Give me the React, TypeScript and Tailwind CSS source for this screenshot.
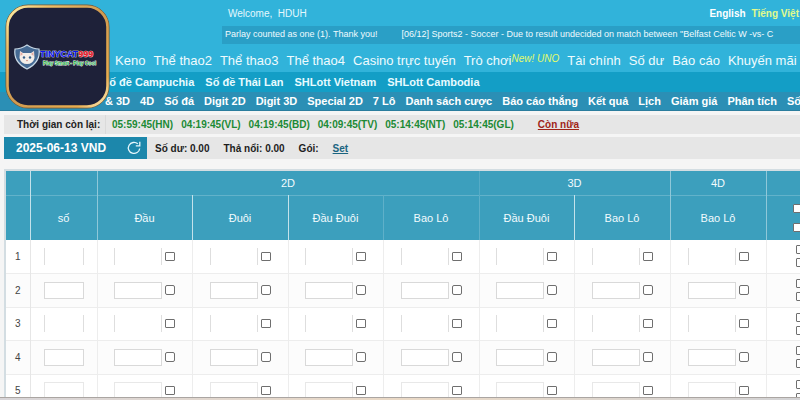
import React from 'react';
import clsx from 'clsx';

interface BetColumn {
  label: string;
  width: string;
  border: string;
}

const mainNav = ['Keno', 'Thể thao2', 'Thể thao3', 'Thể thao4', 'Casino trực tuyến', 'Trò chơi', 'Tài chính', 'Số dư', 'Báo cáo', 'Khuyến mãi'];

const lotteryNav = ['Số đề Campuchia', 'Số đề Thái Lan', 'SHLott Vietnam', 'SHLott Cambodia'];

const gameNav = [
  '& 3D', '4D', 'Số đá', 'Digit 2D', 'Digit 3D', 'Special 2D', '7 Lô', 'Danh sách cược',
  'Báo cáo thắng', 'Kết quả', 'Lịch', 'Giảm giá', 'Phân tích', 'Số',
];

const timers = ['05:59:45(HN)', '04:19:45(VL)', '04:19:45(BD)', '04:09:45(TV)', '05:14:45(NT)', '05:14:45(GL)'];

const betColumns: BetColumn[] = [
  { label: 'Đầu', width: 'w-[95px]', border: 'border-[#c4e2eb]' },
  { label: 'Đuôi', width: 'w-[96px]', border: 'border-[#c4e2eb]' },
  { label: 'Đầu Đuôi', width: 'w-[95px]', border: 'border-[#5fb0c9]' },
  { label: 'Bao Lô', width: 'w-[96px]', border: 'border-[#5fb0c9]' },
  { label: 'Đầu Đuôi', width: 'w-[95px]', border: 'border-[#c4e2eb]' },
  { label: 'Bao Lô', width: 'w-[96px]', border: 'border-[#8fc8d9]' },
  { label: 'Bao Lô', width: 'w-[96px]', border: 'border-[#8fc8d9]' },
];

const rows = [1, 2, 3, 4, 5];

const Logo: React.FC = () => (
  <a href="#" aria-label="TINYCAT999" className="absolute left-[5px] top-[4px] z-10 block size-[105px]">
    <svg viewBox="0 0 105 105" className="size-full">
      <defs>
        <linearGradient id="gold" x1="0" y1="0" x2="1" y2="1">
          <stop offset="0" stopColor="#fff0a8" />
          <stop offset="0.200" stopColor="#efc067" />
          <stop offset="0.500" stopColor="#d09a50" />
          <stop offset="0.850" stopColor="#e8ad4e" />
          <stop offset="1" stopColor="#fff0c0" />
        </linearGradient>
      </defs>
      <rect x="1" y="1" width="103" height="103" rx="22" fill="#1e2139" stroke="#7a5a30" strokeWidth="1" />
      <rect x="2.500" y="2.500" width="100" height="100" rx="20.500" fill="none" stroke="url(#gold)" strokeWidth="2.600" />
      {/* Shield with the cat's head */}
      <path d="M22 41 Q28 45 34 45 Q36 58 22 65 Q8 58 10 45 Q16 45 22 41Z" fill="#456a94" stroke="#c9d9e6" strokeWidth="1.200" />
      <path d="M15 47 L18 49 H26 L29 47 L29.500 54 Q28 60 22 60 Q16 60 14.500 54Z" fill="#f3eee9" />
      <path d="M15.500 48 L18 50 L15.500 52Z M28.500 48 L26 50 L28.500 52Z" fill="#e3a9a0" />
      <circle cx="19" cy="53.500" r="1.200" fill="#35608a" />
      <circle cx="25" cy="53.500" r="1.200" fill="#35608a" />
      <path d="M21 56 H23 L22 57.500Z" fill="#c9786f" />
      <text x="35" y="53" fontFamily="Liberation Sans" fontWeight="700" fontSize="9" stroke="#fff" strokeWidth="0.600" paintOrder="stroke">
        <tspan fill="#0a14f0">TINYCAT</tspan>
        <tspan fill="#f0101c">999</tspan>
      </text>
      <text x="38" y="61" fontFamily="Liberation Sans" fontWeight="700" fontSize="5" fill="#0ca838" stroke="#fff" strokeWidth="0.800" paintOrder="stroke">
        Play Smart - Play Cool
      </text>
    </svg>
  </a>
);

const RefreshIcon: React.FC = () => (
  <svg viewBox="0 0 14 14" className="size-[14px]" fill="none" stroke="#e6f7fc" strokeWidth="1.300">
    <path d="M12.700 7.500 A5.700 5.500 0 1 1 10.800 2.800" />
    <path d="M12.800 0.800 V4.800 H8.800" />
  </svg>
);

const Check: React.FC<{ label: string; even?: boolean }> = ({ label, even }) => (
  <input
    type="checkbox"
    aria-label={label}
    className={clsx(
      'w-[10px] shrink-0 appearance-none border border-[#6f6f6f] bg-white',
      even ? 'h-[10px] rounded-[2px]' : 'h-[9px] rounded-[1px]',
    )}
  />
);

const fieldBorder = (row: number) => {
  if (row % 2 === 0) return 'border border-[#d9d9d9]';
  return row === 5 ? 'border border-[#e8e8e8]' : 'border-x border-[#dedede]';
};

const App: React.FC = () => {
  return (
    <div className="relative flex h-screen flex-col overflow-hidden bg-[#f5f5f5] font-['Liberation_Sans',Arial,sans-serif] whitespace-nowrap">
      <Logo />

      {/* Header */}
      <header className="shrink-0 border-b border-[#2a7d9d] bg-[#31b3da] text-white">
        <div className="flex h-[26px] items-center justify-between pl-[228px] pr-[1px] text-[10px] text-[#e4f8fd]">
          <span>Welcome,&nbsp; HDUH</span>
          <div className="flex gap-1.5 font-bold">
            <a href="#" className="text-white">English</a>
            <a href="#" className="text-[#e2fb8c]">Tiếng Việt</a>
          </div>
        </div>
        <div className="ml-[222px] flex h-[18px] items-center gap-6 overflow-hidden bg-[#2a9fc6] pl-[3px] text-[9px] text-[#f0fbfe]">
          <span>Parlay counted as one (1). Thank you!</span>
          <span>[06/12] Sports2 - Soccer - Due to result undecided on match between "Belfast Celtic W -vs- C</span>
        </div>
        <nav className="flex h-7 items-center gap-2 pl-[115px] pt-1.5 text-[13px] text-[#effbfe]">
          {mainNav.map(item => (
            <a key={item} href="#" className="flex shrink-0 items-center">
              {item}
              {item === 'Trò chơi' && <em className="pb-1.5 text-[10px] text-[#e2fb6c]">New! UNO</em>}
            </a>
          ))}
        </nav>
        <nav className="flex h-5 items-center gap-[11px] bg-[#139ec6] pl-[102px] text-[11px] font-bold text-[#e8fbff]">
          {lotteryNav.map(item => (
            <a key={item} href="#">{item}</a>
          ))}
        </nav>
        <nav className="flex h-[18px] items-center gap-2.5 bg-[#2b8fb5] pl-[105px] text-[11px] font-bold">
          {gameNav.map(item => (
            <a key={item} href="#" className="shrink-0">{item}</a>
          ))}
        </nav>
      </header>

      {/* Time left */}
      <div className="ml-1 mt-1 flex h-[19px] shrink-0 items-center bg-[#e6e6e6] text-[10px] font-bold text-[#1c8a35]">
        <span className="flex h-full w-[102px] items-center border-r border-[#dadada] pl-[13px] text-[#222]">Thời gian còn lại:</span>
        <div className="flex gap-2 pl-1.5">
          {timers.map(timer => (
            <span key={timer}>{timer}</span>
          ))}
        </div>
        <a href="#" className="ml-6 text-[#a02418] underline">Còn nữa</a>
      </div>

      {/* Balance */}
      <div className="ml-1 mt-[3px] flex h-[22px] shrink-0 items-center bg-[#e6e6e6] text-[10px] font-bold text-[#1d1d1d]">
        <div className="flex h-full w-[143px] items-center justify-between bg-[#1c87ab] pl-3 pr-1.5 text-[12px] text-white">
          <span>2025-06-13 VND</span>
          <button type="button" aria-label="Refresh"><RefreshIcon /></button>
        </div>
        <div className="flex gap-3.5 pl-2">
          <span>Số dư: 0.00</span>
          <span>Thả nổi: 0.00</span>
          <span>Gói:</span>
          <a href="#" className="text-[#1a6480] underline">Set</a>
        </div>
      </div>

      {/* Bet table */}
      <main className="ml-1 mt-2.5 min-h-0 flex-1 overflow-hidden border-l-2 border-t-2 border-[#d3dde2]">
        <table className="w-[860px] min-w-full table-fixed border-collapse text-[11px]">
          <colgroup>
            <col className="w-6" />
            <col className="w-[67px]" />
            {betColumns.map((col, i) => (
              <col key={i} className={col.width} />
            ))}
            <col />
          </colgroup>
          <thead className="bg-[#3c9fbd] text-[#f2fbfd]">
            <tr className="h-6 border-b border-[#62b2ca]">
              <th className="border-r border-[#c4e2eb]" />
              <th className="border-r border-[#8fc8d9]" />
              <th colSpan={4} className="border-r border-[#55abc6] font-normal">2D</th>
              <th colSpan={2} className="border-r border-[#8fc8d9] font-normal">3D</th>
              <th className="border-r border-[#8fc8d9] font-normal">4D</th>
              <th />
            </tr>
            <tr className="h-[45px]">
              <th className="border-r border-[#c4e2eb]" />
              <th className="border-r border-[#8fc8d9] font-normal">số</th>
              {betColumns.map((col, i) => (
                <th key={i} className={clsx('border-r font-normal', col.border)}>{col.label}</th>
              ))}
              <th className="pl-[26px]">
                <div className="flex flex-col items-start gap-2.5">
                  <Check label="Chọn tất cả 1" />
                  <Check label="Chọn tất cả 2" />
                </div>
              </th>
            </tr>
          </thead>
          <tbody className="text-[10px] text-[#444]">
            {rows.map(row => {
              const even = row % 2 === 0;
              return (
                <tr key={row} className={clsx('border-b border-[#ededed]', even ? 'h-[34px] bg-[#fcfcfc]' : 'h-[33px] bg-white')}>
                  <td className="border-r border-[#e6e6e6] text-center">{row}</td>
                  <td className="border-r border-[#ededed]">
                    <input
                      type="text"
                      aria-label={`Số ${row}`}
                      className={clsx('mx-auto block h-[17px] w-10 bg-white', fieldBorder(row))}
                    />
                  </td>
                  {betColumns.map((col, i) => (
                    <td key={i} className="border-r border-[#ededed]">
                      <div className="flex items-center justify-center gap-[3px]">
                        <input
                          type="text"
                          aria-label={`${col.label} ${row}`}
                          className={clsx('h-[17px] w-12 bg-white', fieldBorder(row))}
                        />
                        <Check label={`Chọn ${col.label} ${row}`} even={even} />
                      </div>
                    </td>
                  ))}
                  <td className="pl-[29px]">
                    <div className="flex flex-col items-start gap-1">
                      <Check label={`A ${row}`} />
                      <Check label={`B ${row}`} />
                    </div>
                  </td>
                </tr>
              );
            })}
          </tbody>
        </table>
      </main>
      <footer className="h-[3px] shrink-0 border-t border-[#aaa5a2] bg-linear-to-r from-[#d8d5d8] via-[#ead9c6] to-[#d3d3d5]" />
    </div>
  );
};

export default App;
